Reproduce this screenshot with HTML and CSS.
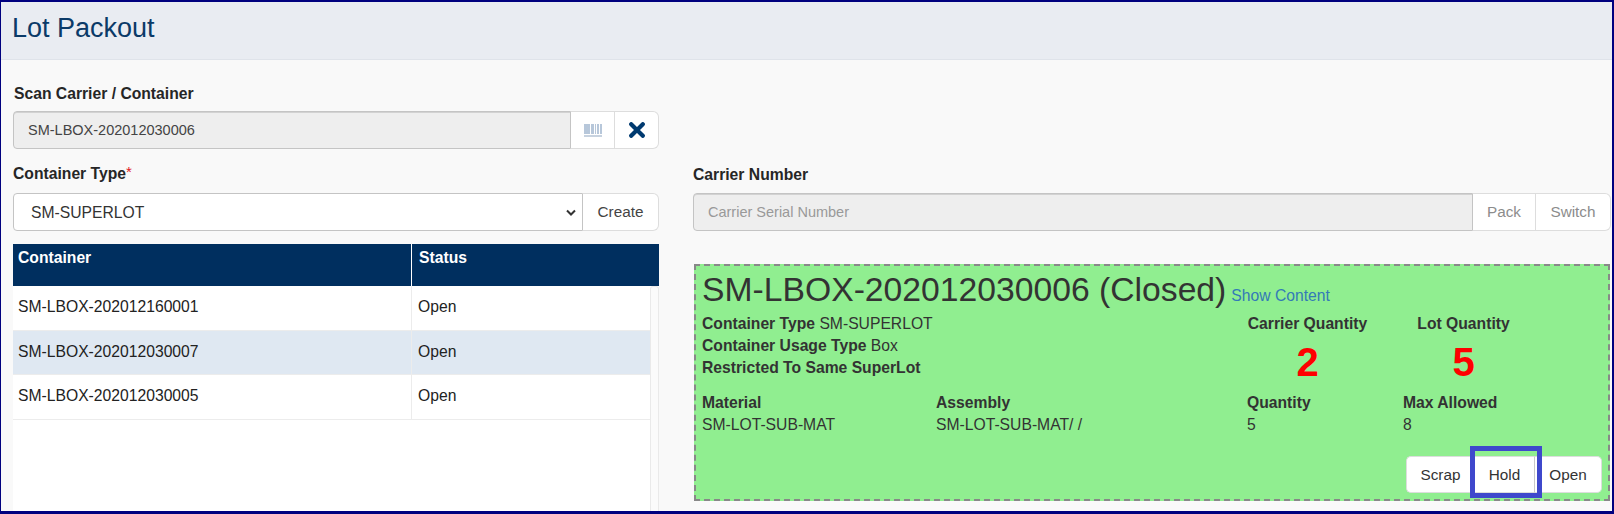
FILE: index.html
```html
<!DOCTYPE html>
<html lang="en">
<head>
<meta charset="utf-8">
<title>Lot Packout</title>
<link rel="stylesheet" href="styles.css">
</head>
<body>
<div class="frame">
  <header class="page-header"><h1>Lot Packout</h1></header>
  <main class="main">
    <section class="left">
      <label class="field-label scan-label">Scan Carrier / Container</label>
      <div class="group scan-group">
        <input class="text-input scan-input" type="text" value="SM-LBOX-202012030006" readonly>
        <button class="addon icon-btn" type="button" aria-label="Scan">
          <svg width="18" height="13" viewBox="0 0 18 13">
            <path fill="#b7c7da" d="M0 0h6v10H0zM7 0h3v10H7zM11 0h1v10h-1zM13 0h2v10h-2zM16 0h2v10h-2z"/>
            <path fill="#8fa5bf" d="M0 11.500h18v1H0z"/>
          </svg>
        </button>
        <button class="addon icon-btn end" type="button" aria-label="Clear">
          <svg width="16" height="16" viewBox="0 0 16 16">
            <path stroke="#003a70" stroke-width="4.200" stroke-linecap="round" fill="none" d="M2.200 2.200l11.600 11.600M13.800 2.200L2.200 13.800"/>
          </svg>
        </button>
      </div>
      <label class="field-label type-label">Container Type<span class="req">*</span></label>
      <div class="group type-group">
        <select class="select-input"><option>SM-SUPERLOT</option></select>
        <button class="addon end create" type="button">Create</button>
      </div>
      <div class="list-head">
        <div class="col-a">Container</div>
        <div class="col-b">Status</div>
      </div>
      <div class="list-body">
        <div class="rows">
          <div class="row"><div class="col-a">SM-LBOX-202012160001</div><div class="col-b">Open</div></div>
          <div class="row selected"><div class="col-a">SM-LBOX-202012030007</div><div class="col-b">Open</div></div>
          <div class="row"><div class="col-a">SM-LBOX-202012030005</div><div class="col-b">Open</div></div>
        </div>
        <div class="scrollbar"></div>
      </div>
    </section>
    <section class="right">
      <label class="field-label">Carrier Number</label>
      <div class="group carrier-group">
        <input class="text-input placeholder-input" type="text" placeholder="Carrier Serial Number" readonly>
        <button class="addon muted pack" type="button">Pack</button>
        <button class="addon muted end switch" type="button">Switch</button>
      </div>
      <div class="panel">
        <div class="panel-title">SM-LBOX-202012030006 (Closed)<a class="show-link" href="#">Show Content</a></div>
        <div class="summary">
          <div class="info">
            <div><b>Container Type</b> SM-SUPERLOT</div>
            <div><b>Container Usage Type</b> Box</div>
            <div><b>Restricted To Same SuperLot</b></div>
          </div>
          <div class="qty"><b>Carrier Quantity</b><div class="num">2</div></div>
          <div class="qty"><b>Lot Quantity</b><div class="num">5</div></div>
        </div>
        <div class="details">
          <b>Material</b><b>Assembly</b><b>Quantity</b><b>Max Allowed</b>
          <span>SM-LOT-SUB-MAT</span><span>SM-LOT-SUB-MAT/ /</span><span>5</span><span>8</span>
        </div>
        <div class="actions">
          <button class="act scrap" type="button">Scrap</button>
          <button class="act hold" type="button">Hold<span class="highlight"></span></button>
          <button class="act open" type="button">Open</button>
        </div>
      </div>
    </section>
  </main>
</div>
</body>
</html>
```
FILE: styles.css
```css
* { box-sizing: border-box; }
html, body { margin: 0; padding: 0; }
body {
  font-family: "Liberation Sans", Arial, sans-serif;
  font-size: 15.700px;
  color: #333;
  background: #f9f9f9;
}
.frame {
  width: 1614px;
  height: 514px;
  overflow: hidden;
  border-style: solid;
  border-color: #00007f;
  border-width: 2px 2px 3px 1px;
  background: #f9f9f9;
}
.page-header {
  height: 58px;
  padding-left: 11px;
  background: #e9ecf2;
  border-bottom: 1px solid #dfe3ea;
}
.page-header h1 {
  margin: 0;
  font-size: 27px;
  font-weight: 400;
  line-height: 53px;
  color: #0b3a68;
}
.main {
  display: grid;
  grid-template-columns: 646px 918px;
  column-gap: 34px;
  padding-left: 12px;
}
.field-label {
  display: block;
  height: 20px;
  margin-bottom: 7px;
  font-size: 15.700px;
  line-height: 20px;
  font-weight: 700;
  color: #262626;
}
.left { padding-top: 24px; }
.scan-label { padding-left: 1px; }
.type-label { margin-top: 15px; margin-bottom: 9px; }
.req { color: #e01b24; font-weight: 400; vertical-align: 2px; font-size: 15px; line-height: 10px; }
.group { display: flex; height: 38px; }
.scan-group { width: 646px; }
.type-group { width: 646px; }
.text-input, .select-input {
  flex: 1 1 0;
  min-width: 0;
  height: 38px;
  font-family: inherit;
  font-size: 14.500px;
  color: #444;
  outline: none;
  border: 1px solid #c4c4c4;
  border-radius: 4px 0 0 4px;
}
.text-input {
  padding: 0 14px;
  background: #eee;
  box-shadow: inset 0 1px 0 #d2d2d2;
}
.placeholder-input::placeholder { color: #999; opacity: 1; }
.select-input {
  appearance: none;
  padding: 0 30px 0 17px;
  font-size: 15.700px;
  color: #333;
  background: #fff url("data:image/svg+xml,%3Csvg xmlns='http://www.w3.org/2000/svg' width='10' height='7' viewBox='0 0 10 7'%3E%3Cpath d='M1 1.500l4 4 4-4' fill='none' stroke='%23333' stroke-width='2'/%3E%3C/svg%3E") no-repeat right 6px center;
}
.addon {
  flex: none;
  height: 38px;
  padding: 0;
  font-family: inherit;
  font-size: 15.300px;
  color: #444;
  background: #fff;
  border: 1px solid #ddd;
  border-left-width: 0;
}
.end { border-radius: 0 6px 6px 0; }
.icon-btn { width: 44px; display: flex; align-items: center; justify-content: center; }
.create { width: 76px; }
.muted { color: #8c8c8c; }
.pack { width: 63px; }
.switch { width: 75px; }
.list-head, .row { display: grid; grid-template-columns: 398px 1fr; }
.list-head {
  width: 646px;
  height: 42px;
  margin-top: 13px;
  color: #fff;
  font-weight: 700;
  background: #002f5f;
}
.list-head > div { padding: 5px 0 0 5px; line-height: 18px; }
.list-head .col-b { padding-left: 7px; border-left: 1px solid #fff; }
.list-body { display: flex; height: 230px; background: #fff; }
.rows { width: 637px; }
.row {
  height: 44.500px;
  line-height: 42px;
  color: #222;
  border-bottom: 1px solid #ececec;
}
.row > div { padding-left: 5px; }
.row .col-b { padding-left: 6px; border-left: 1px solid #ececec; }
.selected { background: #dfe8f2; }
.scrollbar {
  width: 9px;
  border: 1px solid #eaeaea;
  border-bottom: 0;
  border-radius: 3px 3px 0 0;
  background: #fbfbfb;
}
.right { padding-top: 105px; }
.right .field-label { margin-bottom: 8px; }
.carrier-group { width: 918px; }
.panel {
  display: flex;
  flex-direction: column;
  width: 916px;
  height: 237px;
  margin: 33px 0 0 1px;
  padding: 4px 6px 6px 6px;
  background: #90ee90;
  border: 2px dashed #888;
  color: #333;
}
.panel-title { height: 43px; font-size: 33.700px; line-height: 39px; white-space: nowrap; }
.show-link { margin-left: 5px; font-size: 15.700px; color: #337ab7; text-decoration: none; }
.summary { display: grid; grid-template-columns: 545px 156px 121px; line-height: 22px; }
.qty { width: 121px; text-align: center; white-space: nowrap; }
.num { padding-top: 10px; font-size: 40px; line-height: 34px; font-weight: 700; color: #f00; }
.details {
  display: grid;
  grid-template-columns: 234px 311px 156px 1fr;
  margin-top: 13px;
  line-height: 22px;
}
.actions { display: flex; justify-content: flex-end; margin-top: auto; }
.act {
  height: 37px;
  padding: 0;
  font-family: inherit;
  font-size: 15.300px;
  color: #333;
  background: #fff;
  border: 1px solid #ddd;
  border-left-width: 0;
}
.scrap { width: 69px; border-left-width: 1px; border-radius: 5px 0 0 5px; border-right-color: #fff; }
.hold { position: relative; width: 60px; border-right: 1px solid #c8c8c8; }
.open { width: 67px; border-radius: 0 5px 5px 0; }
.highlight {
  position: absolute;
  left: -5px;
  top: -11px;
  width: 72px;
  height: 52px;
  border: 5px solid #3f48cc;
}
```
